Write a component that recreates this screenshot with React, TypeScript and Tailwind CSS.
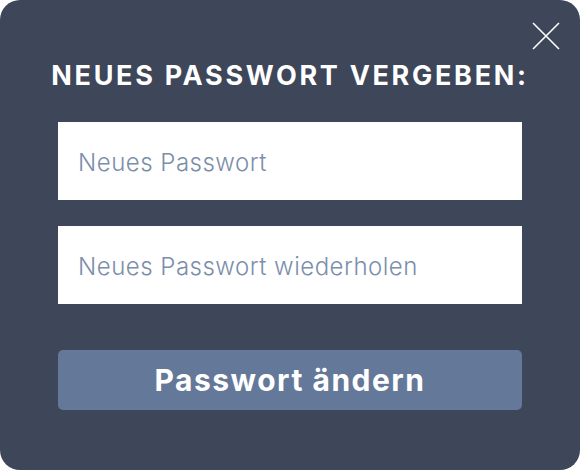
import React from 'react';

const CloseIcon = () => (
  <svg width="30" height="30" viewBox="0 0 30 30" className="block">
    <path d="M2 2 L28 28 M28 2 L2 28" stroke="white" strokeWidth="1.6" fill="none" />
  </svg>
);

export default function App() {
  return (
    <div className="w-[580px] h-[470px] bg-white" style={{ fontFamily: 'Inter, Lato, sans-serif' }}>
      <div className="relative w-full h-full rounded-[20px] bg-[#3e4659] px-[58px] pt-[61px]">
        <button className="absolute right-[19px] top-[21px]" aria-label="Schließen">
          <CloseIcon />
        </button>
        <h2 className="text-white font-bold text-[27px] leading-[30px] tracking-[2.7px] text-center -mx-[20px] whitespace-nowrap">
          NEUES PASSWORT VERGEBEN:
        </h2>
        <div className="mt-[31px] flex flex-col gap-[26px]">
          <input
            type="password"
            placeholder="Neues Passwort"
            className="w-full h-[78px] bg-white px-[20px] pt-[2px] text-[24px] font-light tracking-[0.5px] text-[#3e4659] outline-none placeholder:text-[#7b8eaa]"
          />
          <input
            type="password"
            placeholder="Neues Passwort wiederholen"
            className="w-full h-[78px] bg-white px-[20px] pt-[2px] text-[24px] font-light tracking-[0.5px] text-[#3e4659] outline-none placeholder:text-[#7b8eaa]"
          />
        </div>
        <button className="mt-[46px] w-full h-[60px] rounded-[5px] bg-[#647899] text-white font-bold text-[30px] tracking-[1.5px]">
          Passwort ändern
        </button>
      </div>
    </div>
  );
}
